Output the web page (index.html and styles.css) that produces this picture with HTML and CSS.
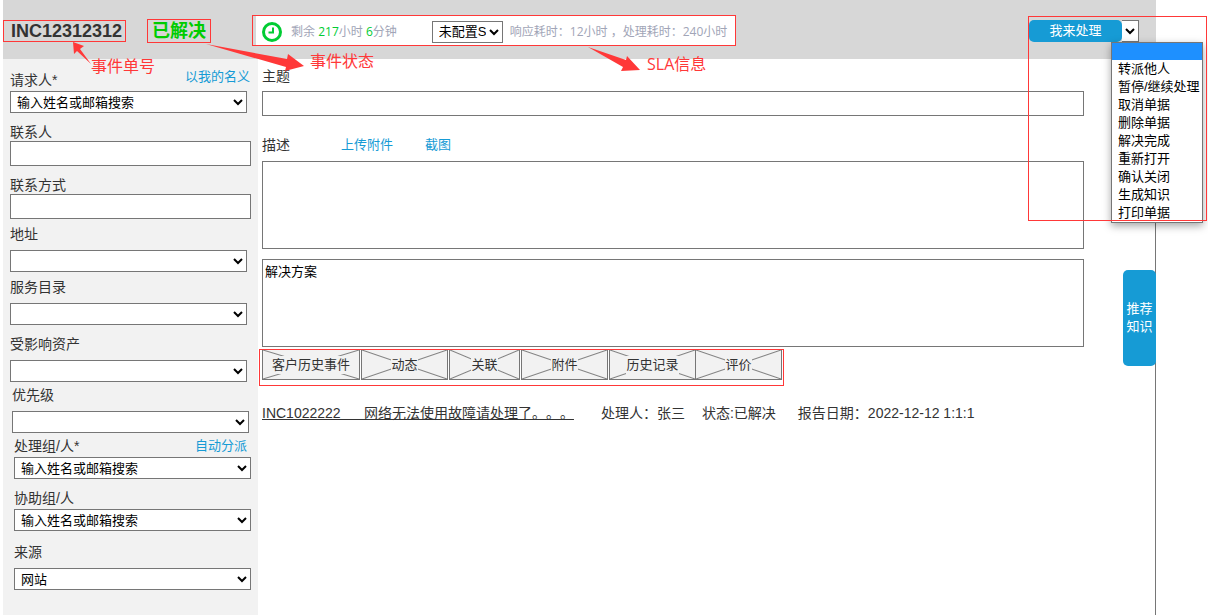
FILE: index.html
```html
<!DOCTYPE html>
<html lang="zh-CN">
<head>
<meta charset="utf-8">
<meta name="viewport" content="width=device-width, initial-scale=1">
<title>INC12312312</title>
<link rel="stylesheet" href="styles.css">
</head>
<body>
<div class="app">
  <header class="topbar">
    <h1 class="ticket-no">INC12312312</h1>
    <strong class="status">已解决</strong>
    <div class="sla">
      <div class="sla-inner">
        <svg class="clock" viewBox="0 0 20 20" aria-hidden="true">
          <circle cx="10" cy="10" r="8.5"/>
          <path d="M11 5.500V10.500H6.500"/>
        </svg>
        <span class="remaining">剩余 <b>217</b>小时 <b>6</b>分钟</span>
        <select class="sla-select" aria-label="SLA"><option>未配置SLA</option></select>
        <span class="elapsed">响应耗时：12小时 ，处理耗时：240小时</span>
      </div>
    </div>
    <div class="actions">
      <button class="take" type="button">我来处理</button>
      <select class="more" aria-label="更多操作"><option></option></select>
      <ul class="menu">
        <li class="active"></li>
        <li>转派他人</li>
        <li>暂停/继续处理</li>
        <li>取消单据</li>
        <li>删除单据</li>
        <li>解决完成</li>
        <li>重新打开</li>
        <li>确认关闭</li>
        <li>生成知识</li>
        <li>打印单据</li>
      </ul>
      <div class="menu-frame"></div>
    </div>
  </header>

  <div class="body">
    <form class="sidebar">
      <div class="field">
        <div class="label-row"><label for="requester">请求人*</label><a class="raised" href="#">以我的名义</a></div>
        <select id="requester"><option>输入姓名或邮箱搜索</option></select>
      </div>
      <div class="field flush">
        <label for="contact">联系人</label>
        <input id="contact" type="text">
      </div>
      <div class="field flush">
        <label for="phone">联系方式</label>
        <input id="phone" type="text">
      </div>
      <div class="field roomy close">
        <label for="address">地址</label>
        <select id="address"><option></option></select>
      </div>
      <div class="field roomy close">
        <label for="catalog">服务目录</label>
        <select id="catalog"><option></option></select>
      </div>
      <div class="field roomy">
        <label for="asset">受影响资产</label>
        <select id="asset"><option></option></select>
      </div>
      <div class="field roomy closest indent-small">
        <label for="priority">优先级</label>
        <select id="priority"><option></option></select>
      </div>
      <div class="field closest indent">
        <div class="label-row"><label for="group">处理组/人*</label><a href="#">自动分派</a></div>
        <select id="group"><option>输入姓名或邮箱搜索</option></select>
      </div>
      <div class="field indent">
        <label for="helper">协助组/人</label>
        <select id="helper"><option>输入姓名或邮箱搜索</option></select>
      </div>
      <div class="field roomy apart indent">
        <label for="source">来源</label>
        <select id="source"><option>网站</option></select>
      </div>
    </form>

    <main class="content">
      <label for="subject">主题</label>
      <input id="subject" class="subject" type="text">
      <div class="desc-row">
        <label for="desc">描述</label>
        <a href="#">上传附件</a>
        <a href="#">截图</a>
      </div>
      <textarea id="desc"></textarea>
      <textarea class="solution" aria-label="解决方案">解决方案</textarea>
      <nav class="tabs">
        <button class="tab tab-wide" type="button"><span>客户历史事件</span></button>
        <button class="tab" type="button"><span>动态</span></button>
        <button class="tab tab-narrow" type="button"><span>关联</span></button>
        <button class="tab" type="button"><span>附件</span></button>
        <button class="tab" type="button"><span>历史记录</span></button>
        <button class="tab tab-joined" type="button"><span>评价</span></button>
      </nav>
      <div class="history">
        <a href="#">INC1022222      网络无法使用故障请处理了。。。</a>
        <span class="handler">处理人：张三</span>
        <span class="state">状态:已解决</span>
        <span>报告日期：2022-12-12 1:1:1</span>
      </div>
    </main>
  </div>

  <button class="recommend" type="button">推荐知识</button>

  <svg class="arrows" width="660" height="80" viewBox="0 0 660 80" aria-hidden="true">
    <path d="M73 42 84 46 80 49 91 64 77 51 74 54Z"/>
    <path d="M206 44 287 59 288 54 304 66 285 71 286 67Z"/>
    <path d="M588 47 626 60 627 56 640 70 621 71 623 67Z"/>
  </svg>
  <span class="note note-no">事件单号</span>
  <span class="note note-status">事件状态</span>
  <span class="note note-sla">SLA信息</span>
</div>
</body>
</html>
```

FILE: styles.css
```css
* { box-sizing: border-box; }

body {
  margin: 0;
  background: #fff;
  color: #333;
  font: 14px/18px "Liberation Sans", "Noto Sans CJK SC", sans-serif;
  text-spacing-trim: space-all;
}

a { color: #169bd5; text-decoration: none; font-size: 13px; }

select, input, textarea, button {
  margin: 0;
  border: 1px solid #767676;
  border-radius: 0;
  background: #fff;
  color: #000;
  font: 13px/18px "Liberation Sans", "Noto Sans CJK SC", sans-serif;
}

select { height: 22px; padding-left: 2px; }
input { height: 25px; }

.app {
  position: relative;
  display: flex;
  flex-direction: column;
  min-height: 100vh;
  margin: 0 52px 0 3px;
  border-right: 1px solid #767676;
}

.topbar {
  display: flex;
  align-items: center;
  height: 59px;
  margin-right: -1px;
  padding: 2px 17px 0 0;
  background: #d7d7d7;
}

.ticket-no {
  margin: 0;
  padding: 0 3px 0 7px;
  border: 1px solid #ff3838;
  font-size: 18px;
  line-height: 20px;
}

.status {
  margin-left: 21px;
  padding: 0 4px;
  border: 1px solid #ff3838;
  color: #0c0;
  font-size: 18px;
  line-height: 22px;
}

.sla {
  margin-left: 41px;
  padding-left: 3px;
  border: 1px solid #ff3838;
}

.sla-inner {
  display: flex;
  align-items: center;
  height: 29px;
  padding: 2px 8px 0 6px;
  background: #fff;
  color: #a1a5b7;
  font: 12px/18px "Open Sans", "Noto Sans CJK SC", sans-serif;
  white-space: nowrap;
}

.clock {
  width: 20px;
  height: 20px;
  margin-right: 9px;
  fill: none;
  stroke: #0c3;
  stroke-width: 3;
}
.clock path { stroke-width: 2; }

.remaining b { color: #0c3; font-weight: 400; }
.sla-select { width: 71px; margin: 0 7px 0 35px; }

.actions {
  position: relative;
  display: flex;
  margin-left: auto;
}

.take {
  width: 93px;
  height: 22px;
  border: 0;
  border-radius: 5px;
  background: #169bd5;
  color: #fff;
}

.more { width: 17px; padding: 0; border-left: 0; }

.menu {
  position: absolute;
  z-index: 2;
  top: 22px;
  right: -64px;
  width: 92px;
  margin: 0;
  padding: 0;
  border: 1px solid #767676;
  background: #fff;
  box-shadow: 0 3px 8px rgba(0, 0, 0, .35);
  color: #000;
  font-size: 13px;
  list-style: none;
  white-space: nowrap;
}
.menu li { height: 18px; padding-left: 6px; }
.menu .active { height: 17px; background: #1e90ff; }

.menu-frame {
  position: absolute;
  z-index: 3;
  top: -4px;
  right: -68px;
  width: 179px;
  height: 205px;
  border: 1px solid #ff3838;
  pointer-events: none;
}

.body { display: flex; flex: 1; }

.sidebar {
  flex: none;
  width: 255px;
  padding: 2px 7px 26px;
  background: #f2f2f2;
}

.field {
  display: flex;
  flex-direction: column;
  gap: 2px;
  margin-top: 10px;
}
.field select { width: 237px; }
.flush { gap: 0; }
.roomy { gap: 7px; }
.apart { margin-top: 12px; }
.close { margin-top: 6px; }
.closest { margin-top: 4px; }
.indent-small { margin-left: 2px; }
.indent { margin-left: 4px; }

.label-row {
  display: flex;
  justify-content: space-between;
  padding-right: 4px;
}
.label-row .raised {
  margin: -3px -3px 0 0;
  padding-bottom: 3px;
}

.content {
  display: flex;
  flex: 1;
  flex-direction: column;
  padding: 8px 71px 0 4px;
}
.subject { margin-top: 6px; }

.desc-row { display: flex; margin: 20px 0 7px; }
.desc-row a { margin-left: 51px; }
.desc-row a + a { margin-left: 32px; }

textarea {
  height: 88px;
  padding: 3px 2px;
  resize: none;
}
.solution { margin-top: 10px; }

.tabs {
  display: flex;
  gap: 1px;
  align-self: flex-start;
  margin: 2px 0 0 -3px;
  padding: 0 1px 5px 2px;
  border: 1px solid #ff3838;
}

.tab {
  width: 87px;
  height: 30px;
  padding: 0;
  border-top: 0;
  background:
    linear-gradient(to top right, transparent calc(50% - 1px), #808080 50%, transparent calc(50% + 1px)),
    linear-gradient(to bottom right, transparent calc(50% - 1px), #808080 50%, transparent calc(50% + 1px)),
    #f2f2f2;
  color: #333;
}
.tab span { display: inline-block; background: #f2f2f2; }
.tab-wide { width: 98px; }
.tab-narrow { width: 71px; }
.tab-joined { margin-left: -2px; }

.history {
  display: flex;
  margin-top: 18px;
  white-space: pre;
}
.history a {
  color: #333;
  font-size: 14px;
  text-decoration: underline;
}
.handler { margin: 0 17px 0 27px; }
.state { margin-right: 22px; }

.recommend {
  position: absolute;
  top: 270px;
  right: -1px;
  width: 33px;
  height: 96px;
  padding: 0 3px;
  border: 0;
  border-radius: 5px;
  background: #169bd5;
  color: #fff;
}

.arrows {
  position: absolute;
  top: 0;
  left: -3px;
  fill: #ff3838;
  pointer-events: none;
}

.note {
  position: absolute;
  color: #ff3838;
  font: 16px/20px "Open Sans", "Noto Sans CJK SC", sans-serif;
}
.note-no { top: 56px; left: 88px; }
.note-status { top: 51px; left: 307px; }
.note-sla { top: 54px; left: 644px; }
```
